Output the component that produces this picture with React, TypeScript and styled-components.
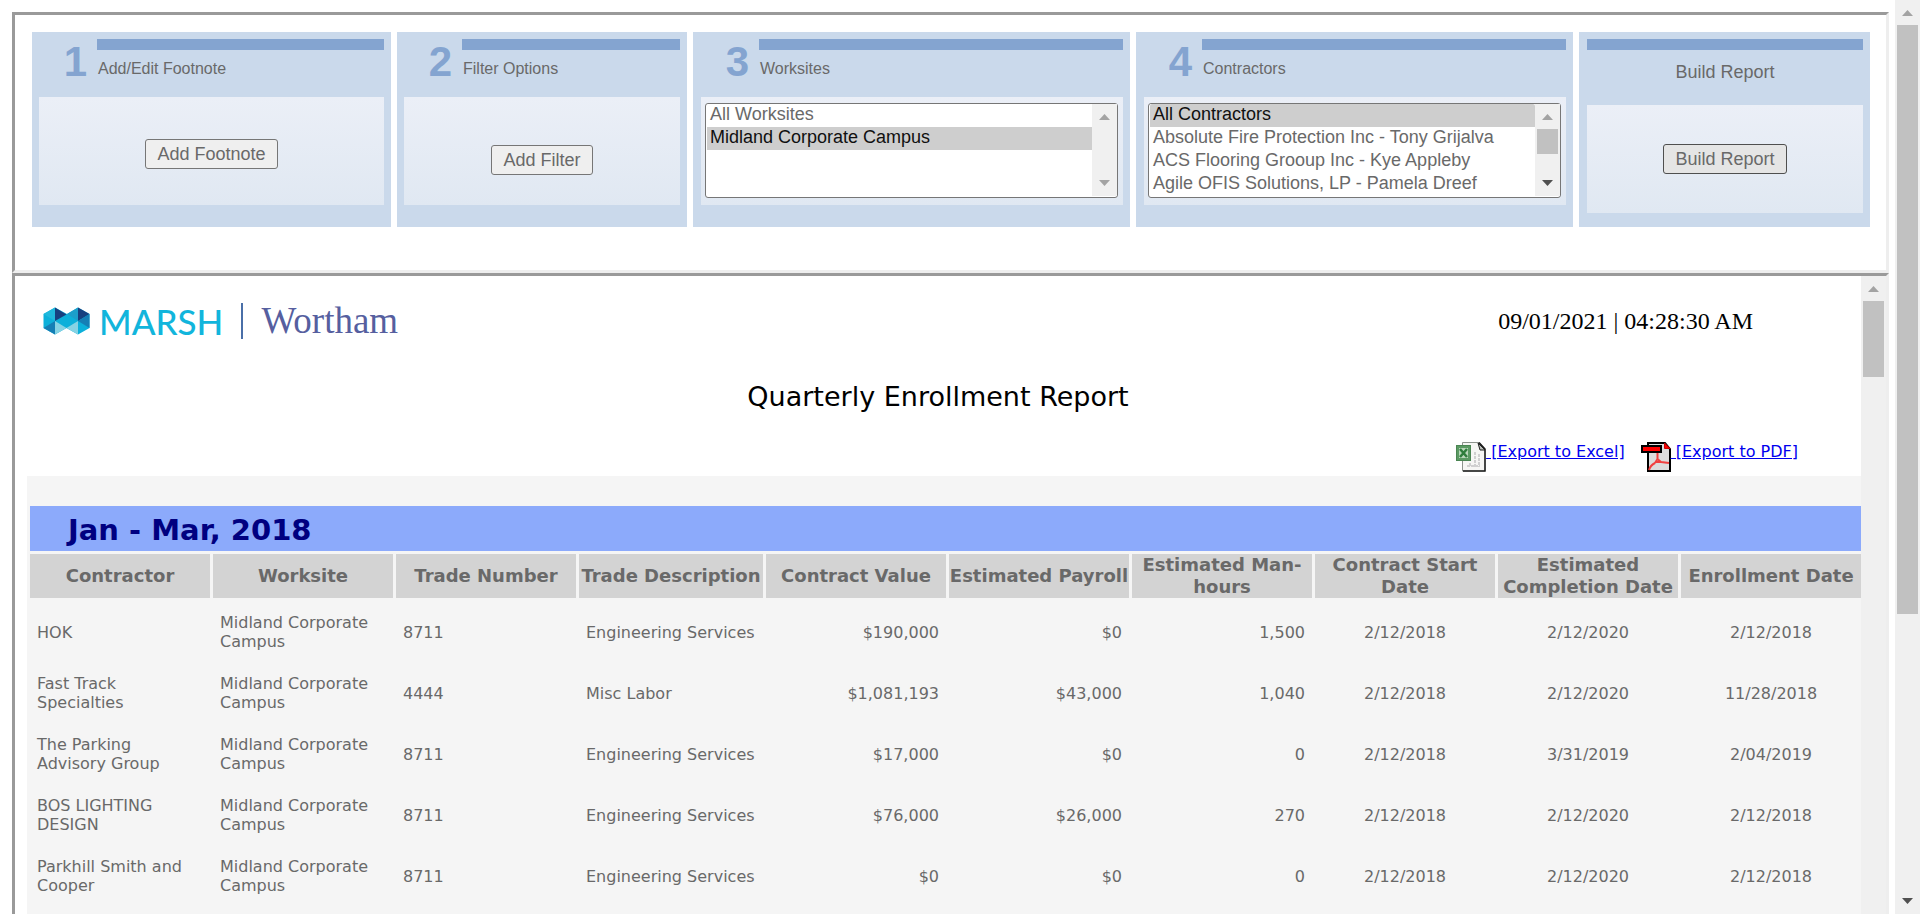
import React from "react";
import styled, { createGlobalStyle } from "styled-components";

const sans = `"Liberation Sans", Arial, sans-serif`;
const wide = `Verdana, "DejaVu Sans", sans-serif`;
const serif = `"Liberation Serif", "Times New Roman", serif`;

const GlobalStyle = createGlobalStyle`
  *, *::before, *::after { box-sizing: border-box; }
  body { margin: 0; background: #fff; color: #696969; font-family: ${sans}; }
`;

const Window = styled.div`
  display: flex;
  height: 100vh;
  overflow: hidden;
`;

const Page = styled.main`
  flex: 1;
  min-width: 0;
  padding: 12px 6px 12px 12px;
`;

const Frame = styled.section`
  border: 3px solid;
  border-color: #9a9a9a #eee #eee #9a9a9a;
`;

const StepsFrame = styled(Frame)`
  padding: 17px 16px 43px 17px;
`;

const Steps = styled.form`
  display: grid;
  grid-template-columns: 359fr 290fr 437fr 437fr 291fr;
  gap: 6px;
`;

const Panel = styled.fieldset<{ $narrow?: boolean }>`
  margin: 0;
  border: 0;
  min-width: 0;
  height: 195px;
  padding: 7px 7px 0 ${(p) => (p.$narrow ? 7 : 8)}px;
  background: #cad9eb;
`;

const PanelHead = styled.div<{ $plain?: boolean }>`
  display: grid;
  grid-template-columns: ${(p) => (p.$plain ? "1fr" : "58px 1fr")};
  height: ${(p) => (p.$plain ? 66 : 58)}px;
`;

const StepNumber = styled.span`
  padding: 2px 10px 0 0;
  text-align: right;
  font-weight: bold;
  font-size: 42px;
  line-height: 42px;
  color: #84a4d0;
`;

const StepTitle = styled.div<{ $center?: boolean }>`
  border-top: 11px solid #84a4d0;
  padding: ${(p) => (p.$center ? "12px 0 0" : "9px 0 0 1px")};
  text-align: ${(p) => (p.$center ? "center" : "left")};
  font-size: ${(p) => (p.$center ? 18 : 16)}px;
  line-height: 20px;
`;

const PanelBody = styled.div<{ $top?: number }>`
  display: flex;
  align-items: flex-start;
  justify-content: center;
  height: 108px;
  padding: ${(p) => p.$top ?? 39}px 0 0;
  background: linear-gradient(#ebeff7, #e0e8f2);
`;

const Button = styled.button<{ $active?: boolean }>`
  height: 30px;
  padding: 0 11px;
  border: 1px solid ${(p) => (p.$active ? "#4f4f4f" : "#767676")};
  border-radius: 3px;
  background: ${(p) => (p.$active ? "#e5e5e5" : "#efefef")};
  color: #696969;
  font: 18px/26px ${sans};
`;

const ListBox = styled.div`
  display: flex;
  flex: 1;
  min-width: 0;
  height: 95px;
  margin: 0 5px 0 4px;
  padding: 0 0 1px 1px;
  border: 1px solid #767676;
  border-radius: 3px;
  background: #fff;
`;

const List = styled.select`
  flex: 1;
  min-width: 0;
  height: 100%;
  margin: 0;
  padding: 0;
  border: 0;
  outline: 0;
  background: #fff;
  color: #696969;
  font: 18px ${sans};
  overflow: hidden;

  option {
    height: 23px;
    min-height: 23px;
    padding: 0 3px 2px;
    line-height: 20px;
  }
`;

const Track = styled.div`
  display: flex;
  flex-direction: column;
  flex: none;
  width: 25px;
  padding: 0 2px;
  background: #f0f0f0;
`;

const Thumb = styled.div<{ $size: number }>`
  height: ${(p) => p.$size}px;
  background: #c1c1c1;
`;

const ArrowBox = styled.svg<{ $end?: boolean }>`
  display: block;
  width: 21px;
  height: 25px;
  flex: none;
  margin-top: ${(p) => (p.$end ? "auto" : "0")};
`;

function Scrollbar({ thumb, atEnd }: { thumb: number; atEnd?: boolean }) {
  return (
    <Track aria-hidden="true">
      <ArrowBox viewBox="0 0 21 25">
        <path d="M5 16 L10.500 10 L16 16Z" fill="#a3a3a3" />
      </ArrowBox>
      <Thumb $size={thumb} />
      <ArrowBox viewBox="0 0 21 25" $end>
        <path d="M5 9 L10.500 15 L16 9Z" fill={atEnd ? "#a3a3a3" : "#505050"} />
      </ArrowBox>
    </Track>
  );
}

const ReportFrame = styled(Frame)`
  display: flex;
  min-height: 100vh;
`;

const Report = styled.div`
  flex: 1;
  min-width: 0;
  padding: 0 0 0 12px;
  overflow: hidden;
  font-family: ${wide};
`;

const Masthead = styled.header`
  display: flex;
  align-items: flex-start;
  justify-content: space-between;
  padding: 27px 108px 0 16px;
`;

const Brand = styled.div`
  display: flex;
  align-items: center;
`;

const Marsh = styled.span`
  margin-left: 8px;
  color: #12b5dc;
  font: 500 35px/36px Lato, sans-serif;
`;

const BrandRule = styled.span`
  width: 2px;
  height: 36px;
  margin: 0 18px;
  background: #4a6fa8;
`;

const Wortham = styled.span`
  color: #565f9f;
  font: 37px/36px ${serif};
`;

const Stamp = styled.time`
  color: #000;
  font: 24px/36px ${serif};
`;

const Title = styled.h1`
  margin: 41px 0 0;
  padding-right: 12px;
  text-align: center;
  font-weight: normal;
  font-size: 27px;
  line-height: 34px;
  color: #000;
`;

const Exports = styled.nav`
  display: flex;
  justify-content: flex-end;
  gap: 16px;
  height: 62px;
  padding: 28px 63px 0 0;
`;

const ExportLink = styled.a`
  display: flex;
  align-items: flex-start;
  font-size: 16px;
  line-height: 20px;
  color: #0000ee;
  white-space: pre;

  svg {
    flex: none;
    width: 30px;
    height: 30px;
  }
`;

const TableArea = styled.div`
  padding-top: 27px;
  background: #f5f5f5;
  min-height: 100vh;
`;

const Table = styled.table`
  width: calc(100% + 3px);
  table-layout: fixed;
  border-spacing: 3px;
`;

const Quarter = styled.th`
  height: 45px;
  padding: 2px 38px 0;
  background: #8caafb;
  color: #000080;
  text-align: left;
  font-size: 29px;
  line-height: 34px;
`;

const Head = styled.th`
  height: 44px;
  padding: 0;
  background: #d3d3d3;
  font-size: 18px;
  line-height: 22px;
`;

const Cell = styled.td<{ $align?: "left" | "right" | "center" }>`
  height: 58px;
  padding: 4px 7px 0;
  text-align: ${(p) => p.$align ?? "left"};
  font-size: 16px;
  line-height: 19px;
`;

const columns = [
  "Contractor",
  "Worksite",
  "Trade Number",
  "Trade Description",
  "Contract Value",
  "Estimated Payroll",
  "Estimated Man-hours",
  "Contract Start Date",
  "Estimated Completion Date",
  "Enrollment Date",
];

const aligns = ["left", "left", "left", "left", "right", "right", "right", "center", "center", "center"] as const;

const site = "Midland Corporate Campus";
const eng = "Engineering Services";
const rows = [
  ["HOK", site, "8711", eng, "$190,000", "$0", "1,500", "2/12/2018", "2/12/2020", "2/12/2018"],
  ["Fast Track Specialties", site, "4444", "Misc Labor", "$1,081,193", "$43,000", "1,040", "2/12/2018", "2/12/2020", "11/28/2018"],
  ["The Parking Advisory Group", site, "8711", eng, "$17,000", "$0", "0", "2/12/2018", "3/31/2019", "2/04/2019"],
  ["BOS LIGHTING DESIGN", site, "8711", eng, "$76,000", "$26,000", "270", "2/12/2018", "2/12/2020", "2/12/2018"],
  ["Parkhill Smith and Cooper", site, "8711", eng, "$0", "$0", "0", "2/12/2018", "2/12/2020", "2/12/2018"],
];

function MarshMark() {
  return (
    <svg width="48" height="28" viewBox="0 0 48 28" aria-hidden="true">
      <path d="M0.500 7 L12 0.500 L24 7 L35 0.500 L46.500 7 V21 L35 27.500 L23.500 21 L12 27.500 L0.500 21Z" fill="#0cb0da" />
      <path d="M0.500 7 L12 0.500 V14Z" fill="#1fb8dc" />
      <path d="M0.500 21 L12 14 V27.500Z" fill="#157fb5" />
      <path d="M12 0.500 L23.500 7.500 L12 14Z" fill="#17407f" />
      <path d="M12 14 L23.500 21 L12 27.500Z" fill="#86d3e4" />
      <path d="M35 14 L23.500 21 L35 27.500Z" fill="#86d3e4" />
      <path d="M24 7 L35 0.500 V14Z" fill="#1c9fcb" />
      <path d="M35 0.500 L46.500 7 L35 14Z" fill="#17407f" />
      <path d="M46.500 7 V21 L35 14Z" fill="#157fb5" />
    </svg>
  );
}

function ExcelIcon() {
  return (
    <svg viewBox="0 0 30 30" aria-hidden="true">
      <path d="M6.500 0.500 H23 L29 7 V29 H6.500Z" fill="#f6f6f4" stroke="#8d938d" />
      <path d="M23 0.500 L29 7 V29 H7" fill="none" stroke="#1d1d1d" strokeWidth="1.500" />
      <path d="M22 1 L29 8 H24Z" fill="#b9bdb9" stroke="#222" />
      <path d="M19 10 V25 M23 12 V25 M14 21 V25 M11 24 H24" stroke="#d0d0d0" strokeWidth="2" strokeDasharray="3 1" />
      <rect x="0.500" y="3.500" width="14" height="15" fill="#5b9a63" stroke="#4a8552" />
      <rect x="3" y="6" width="9" height="10" fill="#b9d6ba" />
      <path d="M4 7 L11 15 M11 7 L4 15" stroke="#2f7d3c" strokeWidth="2.500" />
    </svg>
  );
}

function PdfIcon() {
  return (
    <svg viewBox="0 0 30 30" aria-hidden="true">
      <path d="M7 1 H24 L29 7 V29 H7Z" fill="#dcdcdc" stroke="#000" strokeWidth="2" />
      <path d="M23.500 1 V6.500 H29Z" fill="#f00" stroke="#c00" />
      <rect x="1" y="4" width="19" height="6" fill="#f00" stroke="#000" strokeWidth="2" />
      <path
        d="M16.500 11 V17 L14 21 M16.500 17 L20 20 H15 M20 20 L28 21 M14 21 C12 22 9 24 8 28"
        fill="none"
        stroke="#f04040"
        strokeWidth="2"
      />
    </svg>
  );
}

export default function App() {
  return (
    <Window>
      <GlobalStyle />
      <Page>
        <StepsFrame>
          <Steps onSubmit={(e) => e.preventDefault()}>
            <Panel $narrow>
              <PanelHead>
                <StepNumber>1</StepNumber>
                <StepTitle>Add/Edit Footnote</StepTitle>
              </PanelHead>
              <PanelBody $top={42}>
                <Button type="button">Add Footnote</Button>
              </PanelBody>
            </Panel>
            <Panel $narrow>
              <PanelHead>
                <StepNumber>2</StepNumber>
                <StepTitle>Filter Options</StepTitle>
              </PanelHead>
              <PanelBody $top={48}>
                <Button type="button">Add Filter</Button>
              </PanelBody>
            </Panel>
            <Panel>
              <PanelHead>
                <StepNumber>3</StepNumber>
                <StepTitle as="label" htmlFor="worksites">
                  Worksites
                </StepTitle>
              </PanelHead>
              <PanelBody $top={6}>
                <ListBox>
                  <List id="worksites" size={4} defaultValue="midland">
                    <option value="all">All Worksites</option>
                    <option value="midland">Midland Corporate Campus</option>
                  </List>
                  <Scrollbar thumb={0} atEnd />
                </ListBox>
              </PanelBody>
            </Panel>
            <Panel>
              <PanelHead>
                <StepNumber>4</StepNumber>
                <StepTitle as="label" htmlFor="contractors">
                  Contractors
                </StepTitle>
              </PanelHead>
              <PanelBody $top={6}>
                <ListBox>
                  <List id="contractors" size={4} defaultValue="all">
                    <option value="all">All Contractors</option>
                    <option value="absolute">Absolute Fire Protection Inc - Tony Grijalva</option>
                    <option value="acs">ACS Flooring Grooup Inc - Kye Appleby</option>
                    <option value="agile">Agile OFIS Solutions, LP - Pamela Dreef</option>
                  </List>
                  <Scrollbar thumb={25} />
                </ListBox>
              </PanelBody>
            </Panel>
            <Panel>
              <PanelHead $plain>
                <StepTitle $center>Build Report</StepTitle>
              </PanelHead>
              <PanelBody>
                <Button type="submit" $active>
                  Build Report
                </Button>
              </PanelBody>
            </Panel>
          </Steps>
        </StepsFrame>

        <ReportFrame>
          <Report>
            <Masthead>
              <Brand>
                <MarshMark />
                <Marsh>MARSH</Marsh>
                <BrandRule />
                <Wortham>Wortham</Wortham>
              </Brand>
              <Stamp dateTime="2021-09-01T04:28:30">09/01/2021 | 04:28:30 AM</Stamp>
            </Masthead>
            <Title>Quarterly Enrollment Report</Title>
            <Exports>
              <ExportLink href="#excel">
                <ExcelIcon />
                <span> [Export to Excel]</span>
              </ExportLink>
              <ExportLink href="#pdf">
                <PdfIcon />
                <span> [Export to PDF]</span>
              </ExportLink>
            </Exports>
            <TableArea>
              <Table>
                <colgroup>
                  {columns.map((c, i) => (
                    <col key={c} width={i === 3 ? 184 : undefined} />
                  ))}
                </colgroup>
                <thead>
                  <tr>
                    <Quarter colSpan={10}>Jan - Mar, 2018</Quarter>
                  </tr>
                  <tr>
                    {columns.map((c) => (
                      <Head key={c} scope="col">
                        {c}
                      </Head>
                    ))}
                  </tr>
                </thead>
                <tbody>
                  {rows.map((row) => (
                    <tr key={row[0]}>
                      {row.map((value, i) => (
                        <Cell key={i} $align={aligns[i]}>
                          {value}
                        </Cell>
                      ))}
                    </tr>
                  ))}
                </tbody>
              </Table>
            </TableArea>
          </Report>
          <Scrollbar thumb={76} />
        </ReportFrame>
      </Page>
      <Scrollbar thumb={589} />
    </Window>
  );
}
